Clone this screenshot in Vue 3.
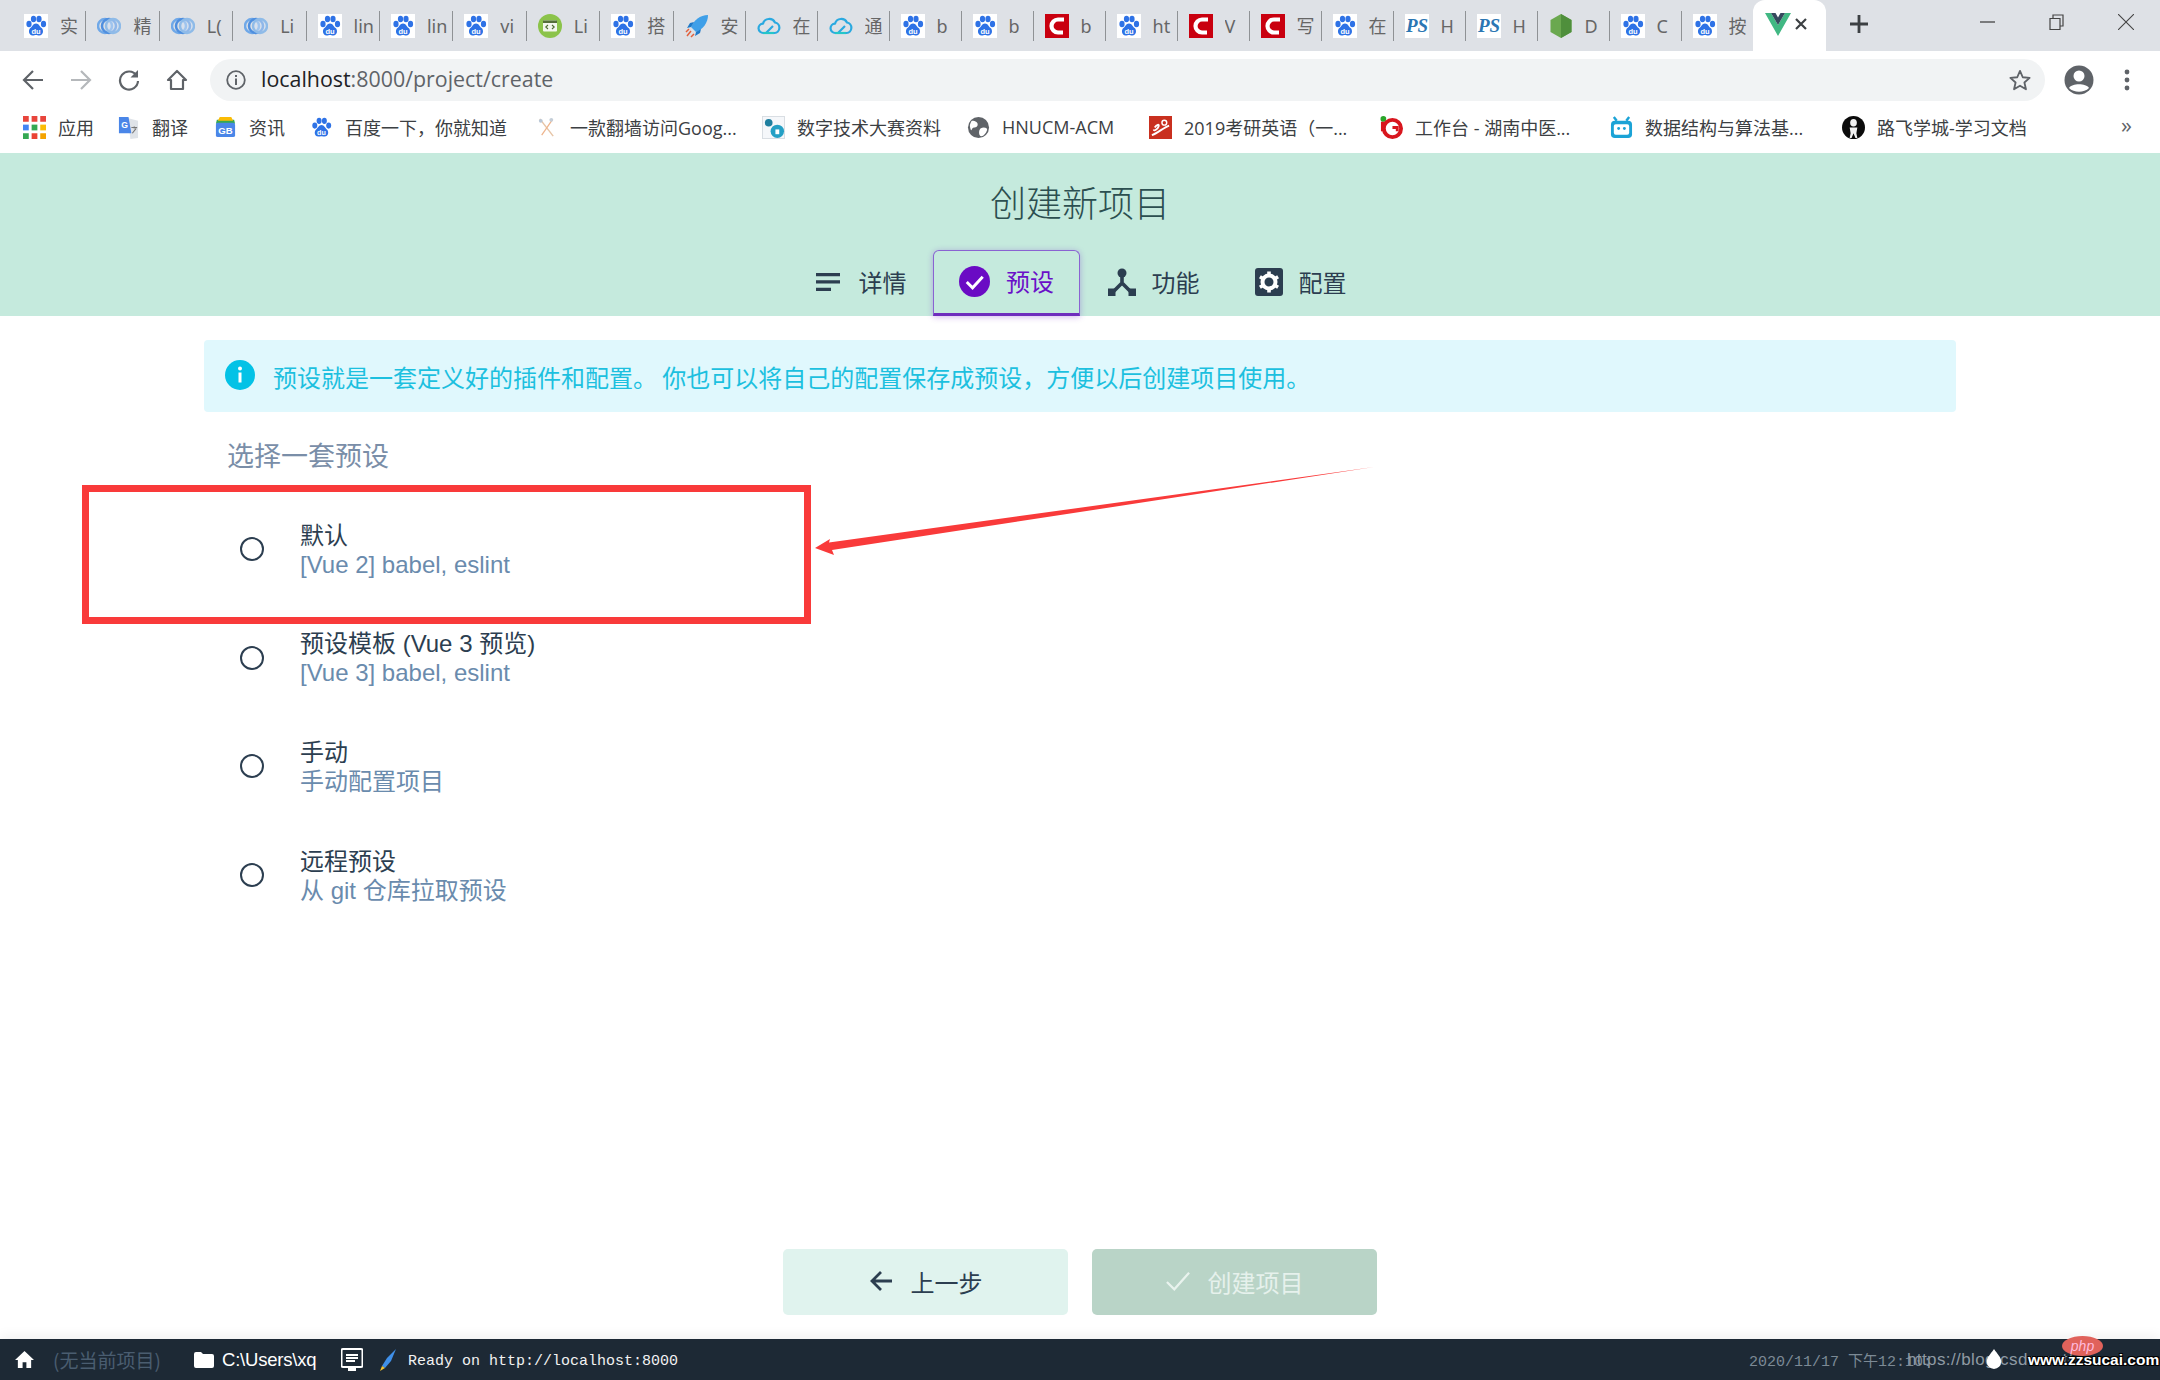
<script setup>
const tabs = [
  ['paw','实'],['swirl','精'],['swirl','L('],['swirl','Li'],['paw','lin'],['paw','lin'],['paw','vi'],['code','Li'],
  ['paw','搭'],['rocket','安'],['tcloud','在'],['tcloud','通'],['paw','b'],['paw','b'],['csdn','b'],['paw','ht'],
  ['csdn','V'],['csdn','写'],['paw','在'],['ps','H'],['ps','H'],['node','D'],['paw','C'],['paw','按']
]
const bookmarks = [
  { icon:'apps', label:'应用', w:94 },
  { icon:'translate', label:'翻译', w:97 },
  { icon:'news', label:'资讯', w:96 },
  { icon:'paw', label:'百度一下，你就知道', w:225 },
  { icon:'tool', label:'一款翻墙访问Goog...', w:227 },
  { icon:'geardoc', label:'数字技术大赛资料', w:205 },
  { icon:'globe', label:'HNUCM-ACM', w:182 },
  { icon:'kaoyan', label:'2019考研英语（一...', w:231 },
  { icon:'gred', label:'工作台 - 湖南中医...', w:230 },
  { icon:'bili', label:'数据结构与算法基...', w:232 },
  { icon:'figure', label:'路飞学城-学习文档', w:240 }
]
const steps = [
  { id:'list', label:'详情' },
  { id:'check', label:'预设', active:true },
  { id:'fork', label:'功能' },
  { id:'gearbox', label:'配置' }
]
const presets = [
  { name:'默认', desc:'[Vue 2] babel, eslint' },
  { name:'预设模板 (Vue 3 预览)', desc:'[Vue 3] babel, eslint' },
  { name:'手动', desc:'手动配置项目' },
  { name:'远程预设', desc:'从 git 仓库拉取预设' }
]
</script>

<template>
  <div class="page">
    <svg class="defs" width="0" height="0" aria-hidden="true">
      <defs>
        <symbol id="paw" viewBox="0 0 24 24">
          <rect width="24" height="24" fill="#fff"/>
          <g fill="#2e72e6">
            <ellipse cx="5" cy="10" rx="2.6" ry="3.2"/>
            <ellipse cx="9.5" cy="5" rx="2.6" ry="3.3"/>
            <ellipse cx="15" cy="5" rx="2.6" ry="3.3"/>
            <ellipse cx="19.5" cy="10" rx="2.6" ry="3.2"/>
            <path d="M12 9.500c3 0 3.500 3 5.600 4.600 2.400 1.900 1.800 7.400-2.300 7.400-1.500 0-2.200-.5-3.300-.5s-1.900.5-3.400.5c-4 0-4.600-5.500-2.200-7.400C8.500 12.500 9 9.500 12 9.500z"/>
          </g>
          <text x="12" y="20" text-anchor="middle" font-size="7.500" font-weight="700" fill="#fff" font-family="Liberation Sans, sans-serif">du</text>
        </symbol>
        <symbol id="swirl" viewBox="0 0 24 24">
          <circle cx="8" cy="12" r="7" fill="none" stroke="#6fa8e8" stroke-width="2.500"/>
          <circle cx="12" cy="12" r="7" fill="none" stroke="#4f8fdf" stroke-width="2.500"/>
          <circle cx="16" cy="12" r="7" fill="#cfe0f3" fill-opacity=".5" stroke="#8fbbe8" stroke-width="2.500"/>
        </symbol>
        <symbol id="code" viewBox="0 0 24 24">
          <circle cx="12" cy="12" r="12" fill="#8bc34a"/>
          <rect x="5" y="6.500" width="14" height="11" rx="1" fill="#f3f6ee"/>
          <rect x="5" y="6.500" width="14" height="2.500" fill="#546e3a"/>
          <path d="M10 11l-2.200 2 2.200 2M14 11l2.200 2-2.200 2" fill="none" stroke="#4d6b31" stroke-width="1.100"/>
        </symbol>
        <symbol id="rocket" viewBox="0 0 24 24">
          <path d="M23 1C15 1 9 6 6 13l5 5c7-3 12-9 12-17z" fill="#3f9fe8"/>
          <path d="M6 13l-4 1 3-5 4-1zM11 18l-1 4 5-3 1-4z" fill="#1e79c9"/>
          <path d="M2 22l4-5M1 18l3-3M6 23l3-3" stroke="#e2603c" stroke-width="1.500"/>
        </symbol>
        <symbol id="tcloud" viewBox="0 0 24 24">
          <path d="M6.500 19a4.700 4.700 0 0 1-.5-9.400A6.500 6.500 0 0 1 18 8.500a5.300 5.300 0 0 1-.5 10.500H9l7-7" fill="none" stroke="#2aa9e0" stroke-width="2.200" stroke-linejoin="round"/>
          <path d="M6 19h11" stroke="#25c6c9" stroke-width="2.200"/>
        </symbol>
        <symbol id="csdn" viewBox="0 0 24 24">
          <rect width="24" height="24" fill="#c9000f"/>
          <path d="M19 5.500h-6a6.500 6.500 0 0 0 0 13h5" fill="none" stroke="#fff" stroke-width="4.200"/>
        </symbol>
        <symbol id="ps" viewBox="0 0 24 24">
          <rect width="24" height="24" fill="#fff"/>
          <text x="12" y="18" text-anchor="middle" font-size="19" font-weight="700" font-style="italic" fill="#2b76b3" font-family="Liberation Serif, serif">PS</text>
        </symbol>
        <symbol id="node" viewBox="0 0 24 24">
          <path d="M12 0l10.500 6v12L12 24 1.500 18V6z" fill="#6aa84f"/>
          <path d="M12 0l10.500 6v12L12 24z" fill="#4f8f3c"/>
        </symbol>
        <symbol id="vue" viewBox="0 0 26 24">
          <path d="M0 1h6l7 12 7-12h6L13 24z" fill="#41b883"/>
          <path d="M6 1h4.500L13 5.500 15.500 1H20l-7 12z" fill="#35495e"/>
        </symbol>
        <symbol id="apps" viewBox="0 0 20 20">
          <g fill="#e8453c"><rect x="0" y="0" width="5" height="5"/><rect x="7.500" y="0" width="5" height="5"/><rect x="15" y="0" width="5" height="5"/></g>
          <g fill="#4285f4"><rect x="0" y="7.500" width="5" height="5"/></g>
          <g fill="#34a853"><rect x="7.500" y="7.500" width="5" height="5"/></g>
          <g fill="#fbbc05"><rect x="15" y="7.500" width="5" height="5"/></g>
          <g fill="#34a853"><rect x="0" y="15" width="5" height="5"/></g>
          <g fill="#ea4335"><rect x="7.500" y="15" width="5" height="5"/></g>
          <g fill="#f4a300"><rect x="15" y="15" width="5" height="5"/></g>
        </symbol>
        <symbol id="translate" viewBox="0 0 24 24">
          <path d="M14 24l-3-22 11 3v18z" fill="#dfe3e8"/>
          <path d="M2 1h10l3 17H2z" fill="#4a86e8"/>
          <text x="8" y="13" text-anchor="middle" font-size="9" font-weight="700" fill="#fff" font-family="Liberation Sans, sans-serif">G</text>
          <path d="M15 12h6M18 11v2M16 18l4-5" stroke="#777" stroke-width="1.200" fill="none"/>
        </symbol>
        <symbol id="news" viewBox="0 0 24 24">
          <path d="M3 4h18l1 4H2z" fill="#34a853"/>
          <path d="M6 1h12l2 4H4z" fill="#fbbc05"/>
          <rect x="2" y="7" width="20" height="15" rx="2" fill="#4a86e8"/>
          <text x="12" y="19" text-anchor="middle" font-size="10" font-weight="700" fill="#fff" font-family="Liberation Sans, sans-serif">GB</text>
        </symbol>
        <symbol id="tool" viewBox="0 0 20 24">
          <path d="M3 3l14 18" stroke="#e6c4a6" stroke-width="1.500"/>
          <path d="M16 4L5 20" stroke="#eeb48c" stroke-width="1.300"/>
          <circle cx="4" cy="5" r="2" fill="#b9c7d6"/><circle cx="15" cy="4" r="2" fill="#c4ced8"/>
        </symbol>
        <symbol id="geardoc" viewBox="0 0 24 24">
          <rect x=".5" y=".5" width="23" height="23" fill="#f5f7fa" stroke="#d8dde2"/>
          <circle cx="7" cy="7" r="4" fill="#1f7f9f"/>
          <circle cx="16" cy="16" r="7" fill="#25a0c5"/>
          <rect x="14" y="14" width="4" height="5" fill="#fff"/>
        </symbol>
        <symbol id="globe" viewBox="0 0 24 24">
          <circle cx="12" cy="12" r="11" fill="#5f6368"/>
          <path d="M5 5c4 0 7 2 6 5s-5 1-6 4-2-3-2-4 1-4 2-5zM14 13c3-2 7-1 7 1s-3 7-6 7-3-6-1-8z" fill="#fff"/>
        </symbol>
        <symbol id="kaoyan" viewBox="0 0 24 24">
          <rect width="24" height="24" fill="#c9301f"/>
          <path d="M3 20c6-2 12-8 18-10M6 12c2-3 5-4 4-1s-5 5-5 3" fill="none" stroke="#fff" stroke-width="2"/>
          <circle cx="16" cy="7" r="2.500" fill="none" stroke="#fff" stroke-width="1.500"/>
        </symbol>
        <symbol id="gred" viewBox="0 0 24 24">
          <circle cx="3.500" cy="3" r="3" fill="#2aa52a"/>
          <circle cx="13" cy="13" r="9" fill="none" stroke="#d8161e" stroke-width="4"/>
          <path d="M3 6v10" stroke="#d8161e" stroke-width="4"/>
          <path d="M13 12h5v4" fill="none" stroke="#d8161e" stroke-width="3"/>
        </symbol>
        <symbol id="bili" viewBox="0 0 24 24">
          <rect x="1" y="5" width="22" height="18" rx="4" fill="#1ba3d6"/>
          <path d="M7 5L4 1M17 5l3-4" stroke="#1ba3d6" stroke-width="2.500"/>
          <rect x="4" y="8.500" width="16" height="11" rx="2" fill="#fff"/>
          <circle cx="9" cy="13" r="1.500" fill="#1ba3d6"/><circle cx="15" cy="13" r="1.500" fill="#1ba3d6"/>
        </symbol>
        <symbol id="figure" viewBox="0 0 24 24">
          <circle cx="12" cy="12" r="12" fill="#0b0b0b"/>
          <ellipse cx="12" cy="7" rx="3.500" ry="4" fill="#f2f2f2"/>
          <path d="M8 12h8l-1 6 1 5h-2l-2-5-2 5H8l1-5z" fill="#f2f2f2"/>
        </symbol>
        <symbol id="list" viewBox="0 0 24 20">
          <path d="M0 1h24v3.200H0zM0 8.300h24v3.200H0zM0 15.700h15v3.200H0z" fill="#2c3e50"/>
        </symbol>
        <symbol id="check" viewBox="0 0 32 32">
          <circle cx="16" cy="16" r="16" fill="#6a0bc4"/>
          <path d="M8 16.500l6 6L24.500 11" fill="none" stroke="#fff" stroke-width="3"/>
        </symbol>
        <symbol id="fork" viewBox="0 0 28 28">
          <circle cx="14" cy="5" r="4.500" fill="#2c3e50"/>
          <path d="M14 8v8M14 15L5 24M14 15l9 9" stroke="#2c3e50" stroke-width="3.600" fill="none"/>
          <rect x="0" y="20.500" width="7.500" height="7.500" fill="#2c3e50"/>
          <rect x="20.500" y="20.500" width="7.500" height="7.500" fill="#2c3e50"/>
        </symbol>
        <symbol id="gearbox" viewBox="0 0 28 28">
          <rect width="28" height="28" rx="3" fill="#2c3e50"/>
          <circle cx="14" cy="14" r="6.500" fill="none" stroke="#fff" stroke-width="4"/>
          <path d="M14 3.500v5M14 19.500v5M4.900 8.700l4.300 2.500M18.800 16.800l4.300 2.500M4.900 19.300l4.300-2.500M18.800 11.200l4.300-2.500" stroke="#fff" stroke-width="3.600"/>
        </symbol>
      </defs>
    </svg>

    <header class="chrome">
      <div class="tabstrip">
        <div v-for="(t, i) in tabs" :key="i" class="tab">
          <svg class="fav"><use :href="'#' + t[0]"/></svg>
          <span class="tab-label">{{ t[1] }}</span>
        </div>
        <div class="tab-active">
          <svg class="fav vue"><use href="#vue"/></svg>
          <svg class="tab-x" viewBox="0 0 14 14"><path d="M2 2l10 10M12 2L2 12" stroke="#3c4043" stroke-width="2.200"/></svg>
        </div>
        <svg class="newtab" viewBox="0 0 18 18"><path d="M9 0v18M0 9h18" stroke="#3c4043" stroke-width="2.800"/></svg>
        <div class="winctl">
          <svg viewBox="0 0 16 16"><path d="M0 8h15" stroke="#444" stroke-width="1.300"/></svg>
          <svg viewBox="0 0 16 16"><path d="M1 4.500h10v11H1zM4 4V1h10v11h-2.500" fill="none" stroke="#444" stroke-width="1.200"/></svg>
          <svg viewBox="0 0 16 16"><path d="M0 0l16 16M16 0L0 16" stroke="#444" stroke-width="1.100"/></svg>
        </div>
      </div>

      <div class="toolbar">
        <svg class="tb" viewBox="0 0 22 22"><path d="M21 11H3M11 2l-9 9 9 9" fill="none" stroke="#5f6368" stroke-width="2.200"/></svg>
        <svg class="tb" viewBox="0 0 22 22"><path d="M1 11h18M11 2l9 9-9 9" fill="none" stroke="#b5b8bb" stroke-width="2.200"/></svg>
        <svg class="tb" viewBox="0 0 22 22"><path d="M18.500 6.500A9 9 0 1 0 20 12" fill="none" stroke="#5f6368" stroke-width="2.200"/><path d="M20 1v7.500h-7.500z" fill="#5f6368"/></svg>
        <svg class="tb" viewBox="0 0 22 22"><path d="M11 2L2 11h3v9h12v-9h3z" fill="none" stroke="#5f6368" stroke-width="2.200" stroke-linejoin="round"/></svg>
        <div class="omnibox">
          <svg class="info-small" viewBox="0 0 20 20"><circle cx="10" cy="10" r="8.800" fill="none" stroke="#5f6368" stroke-width="1.800"/><path d="M10 8.500V15M10 5v2" stroke="#5f6368" stroke-width="2"/></svg>
          <span class="url"><b>localhost</b>:8000/project/create</span>
          <svg class="star" viewBox="0 0 24 24"><path d="M12 2l3 7 7.500.7-5.700 5 1.700 7.400L12 18.200 5.500 22.100l1.700-7.400-5.700-5L9 9z" fill="none" stroke="#5f6368" stroke-width="2" stroke-linejoin="round"/></svg>
        </div>
        <svg class="avatar" viewBox="0 0 30 30"><circle cx="15" cy="15" r="14.500" fill="#5f6368"/><circle cx="15" cy="11" r="5.500" fill="#fff"/><path d="M5 23c3-5 17-5 20 0-5 5-15 5-20 0z" fill="#fff"/></svg>
        <svg class="dots" viewBox="0 0 6 22"><circle cx="3" cy="3" r="2.400" fill="#5f6368"/><circle cx="3" cy="11" r="2.400" fill="#5f6368"/><circle cx="3" cy="19" r="2.400" fill="#5f6368"/></svg>
      </div>

      <div class="bookmarks">
        <div v-for="b in bookmarks" :key="b.label" class="bm" :style="{ width: b.w + 'px' }">
          <svg class="bm-ico"><use :href="'#' + b.icon"/></svg>
          <span class="bm-label">{{ b.label }}</span>
        </div>
        <span class="more">»</span>
      </div>
    </header>

    <section class="hero">
      <h1 class="title">创建新项目</h1>
      <nav class="steps">
        <div v-for="s in steps" :key="s.id" class="step" :class="{ active: s.active }">
          <svg class="step-ico" :class="s.id"><use :href="'#' + s.id"/></svg>
          <span>{{ s.label }}</span>
        </div>
      </nav>
    </section>

    <main class="content">
      <div class="notice">
        <svg class="notice-ico" viewBox="0 0 30 30"><circle cx="15" cy="15" r="15" fill="#03c2e6"/><circle cx="15" cy="8.500" r="2" fill="#fff"/><rect x="13.500" y="12.500" width="3" height="10" fill="#fff"/></svg>
        <span>预设就是一套定义好的插件和配置。 你也可以将自己的配置保存成预设，方便以后创建项目使用。</span>
      </div>
      <h2 class="pick">选择一套预设</h2>
      <div class="presets">
        <div v-for="p in presets" :key="p.name" class="preset">
          <span class="radio"></span>
          <div class="preset-text">
            <div class="pname">{{ p.name }}</div>
            <div class="pdesc">{{ p.desc }}</div>
          </div>
        </div>
      </div>
      <div class="actions">
        <button class="btn prev">
          <svg viewBox="0 0 24 24"><path d="M23 12H3M12 3l-9 9 9 9" fill="none" stroke="#2c3e50" stroke-width="2.800"/></svg>
          <span>上一步</span>
        </button>
        <button class="btn create">
          <svg viewBox="0 0 26 24"><path d="M1 13l8 8L25 3" fill="none" stroke="#e9f3ee" stroke-width="2.400"/></svg>
          <span>创建项目</span>
        </button>
      </div>
    </main>

    <footer class="status">
      <svg class="st-home" viewBox="0 0 20 20"><path d="M10 1L0 10.500h3V19h5v-6h4v6h5v-8.500h3z" fill="#fff"/></svg>
      <span class="noproj">(无当前项目)</span>
      <svg class="st-folder" viewBox="0 0 20 16"><path d="M0 2a2 2 0 0 1 2-2h5l2 2h9a2 2 0 0 1 2 2v10a2 2 0 0 1-2 2H2a2 2 0 0 1-2-2z" fill="#fff"/></svg>
      <span class="cwd">C:\Users\xq</span>
      <svg class="st-term" viewBox="0 0 22 24"><path d="M2 1h18a1.500 1.500 0 0 1 1.500 1.500v15A1.500 1.500 0 0 1 20 19H2a1.500 1.500 0 0 1-1.500-1.500v-15A1.500 1.500 0 0 1 2 1z" fill="none" stroke="#fff" stroke-width="2"/><path d="M5 7h12M5 10h12M5 13h9" stroke="#fff" stroke-width="1.800"/><rect x="7" y="20" width="8" height="3" fill="#fff"/></svg>
      <svg class="st-pen" viewBox="0 0 20 24"><path d="M18 1L9 10l-5 8 3 2 6-7z" fill="#3f8fe8"/><path d="M4 18l-2 5 5-3z" fill="#f4c430"/></svg>
      <span class="ready">Ready on http://localhost:8000</span>
      <span class="date">2020/11/17 下午12:10:</span>
      <span class="wm-blog">https://blog.csdn.net/</span>
      <svg class="wm-drop" viewBox="0 0 20 24"><path d="M10 1c4 6 8 9 8 14a8 8 0 0 1-16 0C2 10 6 7 10 1z" fill="#fff"/></svg>
      <div class="wm-php">php</div>
      <span class="wm-site">www.zzsucai.com</span>
    </footer>

    <div class="annot-box"></div>
    <svg class="annot-arrow" viewBox="0 0 570 95"><path d="M0 81l15-9-1 3.500L559 0 17 83l2 5z" fill="#f93a3a"/></svg>
  </div>
</template>

<style>
html, body { margin: 0; background: #fff; }
</style>

<style scoped>
.page {
  position: relative;
  width: 2160px;
  height: 1380px;
  overflow: hidden;
  display: flex;
  flex-direction: column;
  font-family: "Noto Sans CJK SC", "Noto Sans", sans-serif;
  color: #2c3e50;
}
.defs { position: absolute; }

.tabstrip {
  height: 51px;
  background: #dee1e6;
  display: flex;
  align-items: flex-start;
  padding-left: 13px;
  box-sizing: border-box;
}
.tab {
  width: 72px;
  height: 30px;
  margin-top: 11px;
  box-sizing: border-box;
  border-right: 1px solid #8f9295;
  display: flex;
  align-items: center;
  padding-left: 11px;
  gap: 12px;
  flex: none;
  overflow: hidden;
}
.tab:nth-child(-n+9) { width: 73.400px; }
.tab:nth-child(24) { border-right: 0; }
.fav { width: 24px; height: 24px; flex: none; }
.tab-label {
  font-size: 18px;
  line-height: 24px;
  color: #666;
  width: 21px;
  flex: none;
  overflow: hidden;
  white-space: nowrap;
  font-family: "Noto Sans", "Noto Sans CJK SC", sans-serif;
}
.tab-active {
  width: 73px;
  height: 51px;
  margin-left: -1px;
  background: #fff;
  border-radius: 12px 12px 0 0;
  display: flex;
  align-items: center;
  padding: 0 0 0 12px;
  box-sizing: border-box;
  gap: 5px;
  flex: none;
}
.fav.vue { width: 26px; height: 24px; margin-top: -4px; }
.tab-x { width: 14px; height: 14px; margin-top: -4px; flex: none; margin-left: -2px; }
.newtab { width: 18px; height: 18px; margin: 15px 0 0 24px; flex: none; }
.winctl {
  margin-left: auto;
  display: flex;
  gap: 53px;
  padding: 14px 26px 0 0;
}
.winctl svg { width: 16px; height: 16px; display: block; }

.toolbar {
  height: 51px;
  background: #fff;
  display: flex;
  align-items: center;
  padding: 6px 0 0 22px;
  box-sizing: border-box;
}
.tb { width: 22px; height: 22px; margin-right: 26px; flex: none; }
.omnibox {
  width: 1835px;
  height: 42px;
  margin-left: -4px;
  background: #f1f3f4;
  border-radius: 21px;
  display: flex;
  align-items: center;
  padding: 0 14px 0 16px;
  box-sizing: border-box;
  flex: none;
}
.info-small { width: 20px; height: 20px; margin-right: 15px; flex: none; }
.url {
  font-family: "Open Sans", sans-serif;
  font-size: 21.400px;
  line-height: 24px;
  margin-top: -2px;
  color: #5f6368;
  white-space: nowrap;
}
.url b { font-weight: 400; color: #202124; }
.star { width: 22px; height: 22px; margin-left: auto; flex: none; }
.avatar { width: 30px; height: 30px; margin-left: 19px; flex: none; }
.dots { width: 6px; height: 22px; margin-left: 30px; flex: none; }

.bookmarks {
  height: 51px;
  background: #fff;
  display: flex;
  align-items: center;
  padding-left: 23px;
  box-sizing: border-box;
  font-family: "Open Sans", "Noto Sans CJK SC", sans-serif;
  font-size: 18px;
  color: #3c4043;
  white-space: nowrap;
}
.bm { display: flex; align-items: center; gap: 12px; flex: none; }
.bm-ico { width: 23px; height: 23px; flex: none; }
.bm-label { margin-top: -2px; }
.more { margin-left: 39px; font-size: 22px; color: #5f6368; line-height: 1; margin-top: -8px; }

.hero {
  height: 163px;
  background: #c5eadd;
  display: flex;
  flex-direction: column;
  align-items: center;
}
.title {
  margin: 24px 0 0;
  height: 73px;
  font-size: 36px;
  line-height: 48px;
  font-weight: 300;
  color: #2c4f50;
}
.steps { display: flex; margin-top: 0; height: 66px; }
.step {
  width: 147px;
  box-sizing: border-box;
  display: flex;
  align-items: center;
  justify-content: center;
  gap: 16px;
  font-size: 24px;
  color: #2c3e50;
  padding-bottom: 4px;
}
.step:first-child { gap: 19px; padding-left: 3px; }
.step.active {
  color: #6a10c8;
  border: 1.500px solid #8a63d2;
  border-bottom: 3px solid #6f2dbd;
  border-radius: 6px 6px 0 0;
  box-shadow: 0 1px 6px rgba(106, 16, 200, .3);
}
.step-ico { flex: none; width: 28px; height: 28px; margin-top: 2px; }
.step-ico.list { width: 24px; height: 20px; }
.step-ico.check { width: 31px; height: 31px; }

.content {
  flex: 1;
  min-height: 0;
  display: flex;
  flex-direction: column;
  padding: 24px 204px;
  box-sizing: border-box;
}
.notice {
  height: 72px;
  background: #e0f8fd;
  border-radius: 4px;
  display: flex;
  align-items: center;
  gap: 18px;
  padding-left: 21px;
  font-size: 24px;
  color: #1cc0df;
  white-space: pre;
}
.notice-ico { width: 30px; height: 30px; flex: none; margin-top: -2px; }
.pick {
  margin: 26px 0 0 23px;
  font-size: 27px;
  line-height: 34px;
  height: 57px;
  font-weight: 400;
  color: #7a8ea8;
}
.presets { display: flex; flex-direction: column; }
.preset {
  height: 108.600px;
  display: flex;
  align-items: center;
  padding-left: 36px;
}
.radio {
  width: 24px;
  height: 24px;
  box-sizing: border-box;
  border: 2.500px solid #2c3e50;
  border-radius: 50%;
  flex: none;
  margin-right: 36px;
}
.pname { font-size: 24px; line-height: 29px; margin-top: -2px; color: #2c3e50; font-family: "Liberation Sans", "Noto Sans CJK SC", sans-serif; }
.pdesc { font-size: 24px; line-height: 30px; color: #6a8bad; font-family: "Liberation Sans", "Noto Sans CJK SC", sans-serif; }
.preset-text { margin-top: 4px; }

.actions {
  margin-top: auto;
  display: flex;
  justify-content: center;
  gap: 24px;
}
.btn {
  width: 285px;
  height: 66px;
  border: 0;
  border-radius: 5px;
  display: flex;
  align-items: center;
  justify-content: center;
  gap: 18px;
  font-family: inherit;
  font-size: 24px;
  padding: 0 0 2px;
}
.btn svg { width: 24px; height: 24px; flex: none; }
.btn.prev { background: #e0f3ee; color: #2c3e50; }
.btn.create { background: #b9d4c7; color: #e6f1ec; }

.status {
  position: relative;
  height: 41px;
  flex: none;
  background: #1d2935;
  display: flex;
  align-items: center;
  box-shadow: 0 -3px 12px rgba(0, 0, 0, .06);
  padding-left: 15px;
  white-space: nowrap;
}
.st-home { width: 19px; height: 19px; flex: none; }
.noproj { margin-left: 19px; font-size: 19px; color: #4a5d70; width: 141px; flex: none; }
.st-folder { width: 20px; height: 16px; flex: none; }
.cwd { margin-left: 8px; width: 119px; flex: none; font-family: "Liberation Sans", sans-serif; font-size: 18.500px; color: #fff; letter-spacing: -.2px; }
.st-term { width: 22px; height: 24px; flex: none; }
.st-pen { width: 20px; height: 24px; margin-left: 15px; flex: none; }
.ready { margin: 3px 0 0 10px; font-family: "Liberation Mono", monospace; font-size: 15px; width: 270px; color: #f2f2f2; flex: none; }
.date { position: absolute; left: 1749px; top: 10px; font-family: "Liberation Mono", "Noto Sans CJK SC", monospace; font-size: 15px; color: #7c8a95; }
.wm-blog { position: absolute; left: 1907px; top: 11px; font-family: "Liberation Sans", sans-serif; font-size: 17px; color: #8f9aa3; letter-spacing: .4px; }
.wm-drop { position: absolute; left: 1985px; top: 9px; width: 18px; height: 22px; }
.wm-php {
  position: absolute;
  left: 2062px;
  top: -3px;
  width: 41px;
  height: 20px;
  border-radius: 50%;
  background: #e0625b;
  color: #fbd;
  font-family: "Liberation Sans", sans-serif;
  font-style: italic;
  font-size: 14px;
  line-height: 20px;
  text-align: center;
}
.wm-site {
  position: absolute;
  left: 2028px;
  top: 12px;
  font-family: "Liberation Sans", sans-serif;
  font-size: 15.500px;
  font-weight: 700;
  color: #fff;
  text-shadow: 1px 1px 0 #000, -1px -1px 0 #000, 1px -1px 0 #000, -1px 1px 0 #000;
}

.annot-box {
  position: absolute;
  left: 82px;
  top: 485px;
  width: 729px;
  height: 139px;
  box-sizing: border-box;
  border: 7px solid #f93a3a;
  pointer-events: none;
}
.annot-arrow {
  position: absolute;
  left: 815px;
  top: 467px;
  width: 570px;
  height: 95px;
  pointer-events: none;
}
</style>
